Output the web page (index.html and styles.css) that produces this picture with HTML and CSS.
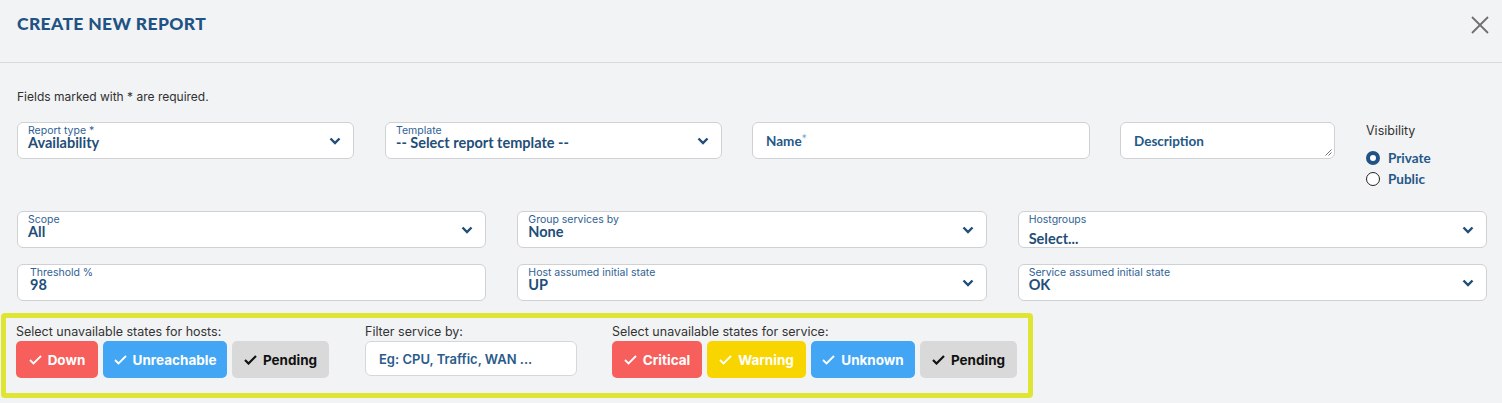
FILE: index.html
```html
<!DOCTYPE html>
<html>
<head>
<meta charset="utf-8">
<link rel="stylesheet" href="styles.css">
</head>
<body>
<div class="modal">
  <header class="head">
    <h1 class="title">CREATE NEW REPORT</h1>
    <button class="close" aria-label="Close">
      <svg width="18" height="18" viewBox="0 0 18 18"><path d="M1 1L17 17M17 1L1 17" stroke="#6f6f6f" stroke-width="1.8" fill="none"/></svg>
    </button>
  </header>
  <div class="body">
    <p class="note">Fields marked with * are required.</p>
    <div class="row1">
      <div class="field sel w337 m31">
        <span class="lbl">Report type *</span>
        <span class="val">Availability</span>
        <svg class="chev" width="12" height="8" viewBox="0 0 12 8"><path d="M1.5 1.5L6 6L10.5 1.5" stroke="#1f4e79" stroke-width="2.4" fill="none"/></svg>
      </div>
      <div class="field sel w337 m30">
        <span class="lbl">Template</span>
        <span class="val">-- Select report template --</span>
        <svg class="chev" width="12" height="8" viewBox="0 0 12 8"><path d="M1.5 1.5L6 6L10.5 1.5" stroke="#1f4e79" stroke-width="2.4" fill="none"/></svg>
      </div>
      <div class="field plain w338 m30">
        <span class="ph">Name<span class="star">*</span></span>
      </div>
      <div class="field plain w215 m31 textarea">
        <span class="ph">Description</span>
        <svg class="grip" width="7" height="7" viewBox="0 0 7 7"><path d="M6.5 0.5L0.5 6.5M6.5 3.5L3.5 6.5" stroke="#555" stroke-width="0.8"/></svg>
      </div>
      <div class="vis">
        <div class="vis-lbl">Visibility</div>
        <label class="radio"><span class="dot on"></span>Private</label>
        <label class="radio"><span class="dot"></span>Public</label>
      </div>
    </div>
    <div class="grid3">
      <div class="field sel">
        <span class="lbl">Scope</span>
        <span class="val">All</span>
        <svg class="chev" width="12" height="8" viewBox="0 0 12 8"><path d="M1.5 1.5L6 6L10.5 1.5" stroke="#1f4e79" stroke-width="2.4" fill="none"/></svg>
      </div>
      <div class="field sel">
        <span class="lbl">Group services by</span>
        <span class="val">None</span>
        <svg class="chev" width="12" height="8" viewBox="0 0 12 8"><path d="M1.5 1.5L6 6L10.5 1.5" stroke="#1f4e79" stroke-width="2.4" fill="none"/></svg>
      </div>
      <div class="field sel tall">
        <span class="lbl">Hostgroups</span>
        <span class="val">Select...</span>
        <svg class="chev" width="12" height="8" viewBox="0 0 12 8"><path d="M1.5 1.5L6 6L10.5 1.5" stroke="#1f4e79" stroke-width="2.4" fill="none"/></svg>
      </div>
      <div class="field inp">
        <span class="lbl">Threshold %</span>
        <span class="val">98</span>
      </div>
      <div class="field sel">
        <span class="lbl">Host assumed initial state</span>
        <span class="val">UP</span>
        <svg class="chev" width="12" height="8" viewBox="0 0 12 8"><path d="M1.5 1.5L6 6L10.5 1.5" stroke="#1f4e79" stroke-width="2.4" fill="none"/></svg>
      </div>
      <div class="field sel">
        <span class="lbl">Service assumed initial state</span>
        <span class="val">OK</span>
        <svg class="chev" width="12" height="8" viewBox="0 0 12 8"><path d="M1.5 1.5L6 6L10.5 1.5" stroke="#1f4e79" stroke-width="2.4" fill="none"/></svg>
      </div>
    </div>
    <div class="states">
      <div class="group">
        <div class="glbl">Select unavailable states for hosts:</div>
        <div class="btns">
          <button class="st red w82"><svg width="13" height="10" viewBox="0 0 13 10"><path d="M1 5L4.5 8.5L12 1" stroke="currentColor" stroke-width="1.8" fill="none"/></svg>Down</button>
          <button class="st blue w124"><svg width="13" height="10" viewBox="0 0 13 10"><path d="M1 5L4.5 8.5L12 1" stroke="currentColor" stroke-width="1.8" fill="none"/></svg>Unreachable</button>
          <button class="st gray w97"><svg width="13" height="10" viewBox="0 0 13 10"><path d="M1 5L4.5 8.5L12 1" stroke="currentColor" stroke-width="2.2" fill="none"/></svg>Pending</button>
        </div>
      </div>
      <div class="group filter">
        <div class="glbl">Filter service by:</div>
        <div class="finput">Eg: CPU, Traffic, WAN ...</div>
      </div>
      <div class="group">
        <div class="glbl">Select unavailable states for service:</div>
        <div class="btns">
          <button class="st red w90"><svg width="13" height="10" viewBox="0 0 13 10"><path d="M1 5L4.5 8.5L12 1" stroke="currentColor" stroke-width="1.8" fill="none"/></svg>Critical</button>
          <button class="st yellow w99"><svg width="13" height="10" viewBox="0 0 13 10"><path d="M1 5L4.5 8.5L12 1" stroke="currentColor" stroke-width="1.8" fill="none"/></svg>Warning</button>
          <button class="st blue w104"><svg width="13" height="10" viewBox="0 0 13 10"><path d="M1 5L4.5 8.5L12 1" stroke="currentColor" stroke-width="1.8" fill="none"/></svg>Unknown</button>
          <button class="st gray w97"><svg width="13" height="10" viewBox="0 0 13 10"><path d="M1 5L4.5 8.5L12 1" stroke="currentColor" stroke-width="2.2" fill="none"/></svg>Pending</button>
        </div>
      </div>
    </div>
  </div>
</div>
</body>
</html>
```
FILE: styles.css
```css
* { box-sizing: border-box; }
html, body { margin: 0; padding: 0; }
body {
  background: #f2f3f5;
  font-family: Inter, "Liberation Sans", sans-serif;
  width: 1502px;
  height: 403px;
  overflow: hidden;
}
.modal { width: 1502px; }
.head {
  height: 63px;
  border-bottom: 1px solid #d7d9dd;
  display: flex;
  align-items: flex-start;
  justify-content: space-between;
  padding: 0 13px 0 17px;
}
.title {
  margin: 13px 0 0 0;
  font-family: Lato, Inter, sans-serif;
  font-weight: 900;
  font-size: 17.5px;
  letter-spacing: 0.35px;
  color: #1f5384;
}
.close {
  margin-top: 16px;
  border: 0;
  background: transparent;
  padding: 0;
  width: 18px;
  height: 18px;
  line-height: 0;
}
.body { padding: 0 15px 0 17px; }
.note {
  margin: 26px 0 0 0;
  font-size: 12px;
  color: #303030;
  line-height: 15px;
}
.row1 {
  display: flex;
  margin-top: 18px;
  height: 70px;
}
.field {
  position: relative;
  background: #fff;
  border: 1px solid #cfd1d5;
  border-radius: 6px;
  height: 37px;
  padding: 2px 10px 0 10px;
  display: flex;
  flex-direction: column;
}
.w337 { width: 337px; }
.w338 { width: 338px; }
.w215 { width: 215px; }
.m30 { margin-right: 30px; }
.m31 { margin-right: 31px; }
.lbl {
  font-size: 10.5px;
  line-height: 11px;
  color: #2f6294;
}
.val {
  font-family: Lato, Inter, sans-serif;
  font-weight: 700;
  font-size: 14.5px;
  line-height: 15px;
  margin-top: -1px;
  color: #1f4e79;
}
.chev {
  position: absolute;
  right: 12px;
  top: 14px;
}
.plain {
  justify-content: center;
  padding: 0 0 0 13px;
}
.ph {
  font-family: Lato, Inter, sans-serif;
  font-weight: 700;
  font-size: 13.5px;
  color: #245888;
}
.star { color: #7ba0c4; font-size: 13px; font-weight: 400; position: relative; top: -2px; }
.grip { position: absolute; right: 2px; bottom: 2px; }
.vis { padding-top: 1px; }
.vis-lbl {
  font-size: 12.5px;
  color: #333;
  line-height: 15px;
  margin-bottom: 9px;
}
.radio {
  display: flex;
  align-items: center;
  gap: 8px;
  font-family: Lato, Inter, sans-serif;
  font-weight: 700;
  font-size: 13.5px;
  color: #245888;
  height: 21px;
}
.dot {
  width: 14px;
  height: 14px;
  border-radius: 50%;
  border: 1.5px solid #222;
  background: #fff;
}
.dot.on {
  border: 4px solid #1f5384;
}
.grid3 {
  display: grid;
  grid-template-columns: repeat(3, 1fr);
  column-gap: 31px;
  row-gap: 16px;
  margin-top: 19px;
}
.tall .val { margin-top: 6px; }
.inp { padding-left: 12px; }
.states {
  margin: 12px 0 0 -16px;
  width: 1032px;
  height: 85px;
  border: 5px solid #dfe533;
  border-radius: 4px;
  display: flex;
  padding: 6px 0 0 10px;
}
.group { display: flex; flex-direction: column; }
.glbl {
  font-size: 12.5px;
  color: #333;
  line-height: 15px;
  margin-bottom: 2px;
}
.btns { display: flex; gap: 5px; }
.st {
  height: 37px;
  border: 0;
  border-radius: 5px;
  font-family: Inter, sans-serif;
  font-weight: 700;
  font-size: 13.5px;
  display: flex;
  align-items: center;
  justify-content: center;
  gap: 6px;
  padding: 0;
}
.red { background: #f65f5b; color: #fff; }
.blue { background: #42a6f5; color: #fff; }
.yellow { background: #f9d500; color: #fff; }
.gray { background: #d9d9d9; color: #111; }
.w82 { width: 82px; }
.w124 { width: 124px; }
.w97 { width: 97px; }
.w90 { width: 90px; }
.w99 { width: 99px; }
.w104 { width: 104px; }
.filter { margin-left: 36px; margin-right: 35px; }
.finput {
  width: 212px;
  height: 35px;
  background: #fff;
  border: 1px solid #d5d7db;
  border-radius: 6px;
  padding-left: 13px;
  display: flex;
  align-items: center;
  font-weight: 600;
  font-size: 13px;
  color: #2a5b8a;
}
```
